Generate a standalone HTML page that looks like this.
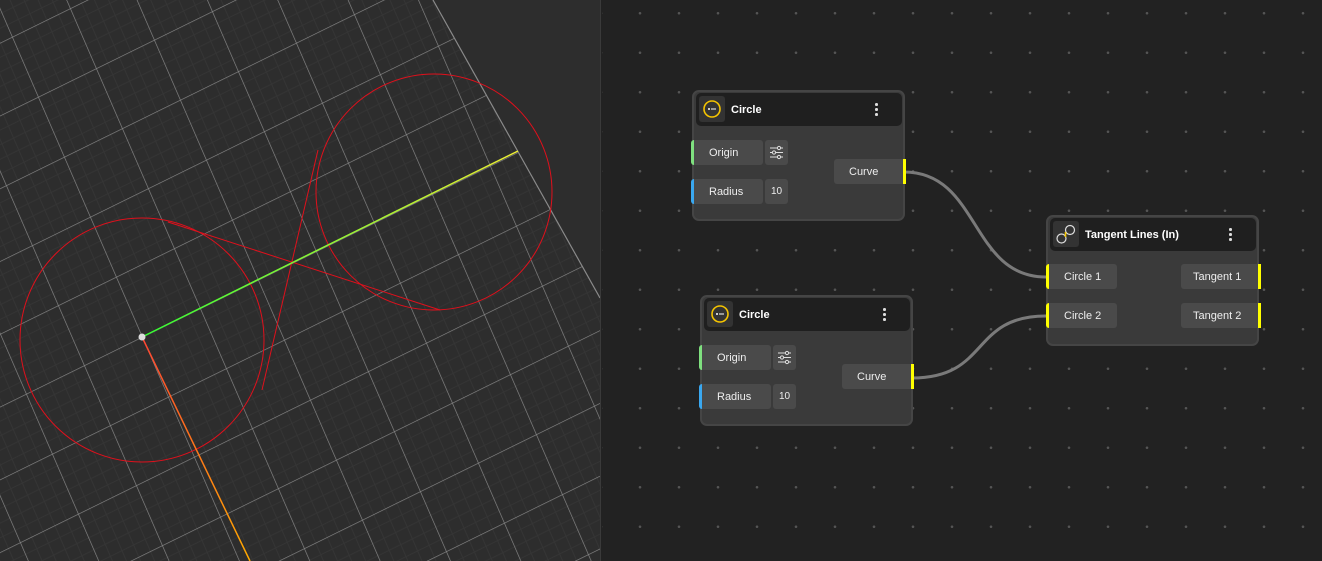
<!DOCTYPE html>
<html><head><meta charset="utf-8"><style>
*{box-sizing:border-box;margin:0;padding:0}
body{width:1322px;height:561px;overflow:hidden;background:#222;font-family:"Liberation Sans",sans-serif;position:relative}
#left{position:absolute;left:0;top:0;width:601px;height:561px;background:#2d2d2d;border-right:1px solid #3a3a3a;overflow:hidden}
#right{position:absolute;left:602px;top:0;width:720px;height:561px;background-color:#222;background-image:radial-gradient(circle,#555 1.1px,transparent 1.5px);background-size:39px 39.5px;background-position:18.5px -6.5px}
.node{position:absolute;width:213px;height:131px;background:#3a3a3a;border:2px solid #454545;border-radius:7px}
.hdr{position:absolute;left:2px;top:1px;right:1px;height:33px;background:#1f1f1f;border-radius:5px}
.ico{position:absolute;left:3px;top:3px;width:26px;height:26px;background:#333;border-radius:3px}
.ttl{position:absolute;left:35px;top:11px;color:#fff;font-weight:bold;font-size:11px}
.menu{position:absolute;right:24px;top:10px;width:3px}
.menu i{display:block;width:2.5px;height:2.5px;background:#ddd;border-radius:50%;margin-bottom:2.5px}
.row{position:absolute;height:25px;background:#4a4a4a;border-radius:3px;color:#eee;font-size:11px;line-height:26px;padding-left:15px}
.lb{border-left:3px solid}
.rb{border-right:3px solid #ff0;border-top-right-radius:0;border-bottom-right-radius:0}
.sq{position:absolute;height:25px;width:23px;background:#4a4a4a;border-radius:3px;color:#eee;font-size:10px;line-height:26px;text-align:center}
</style></head><body>
<div id="left">
<svg width="601" height="561" style="position:absolute;left:0;top:0">
<defs>
<pattern id="g" patternUnits="userSpaceOnUse" width="1" height="1" patternTransform="matrix(58 -28.5 26 60 142 337)">
<path d="M0.2 0V1M0.4 0V1M0.6 0V1M0.8 0V1M0 0.2H1M0 0.4H1M0 0.6H1M0 0.8H1" stroke="#353535" stroke-width="0.014"/>
<path d="M0 0V1M0 0H1" stroke="#8a8a8a" stroke-width="0.02"/>
</pattern>
<clipPath id="c"><polygon points="0,0 433,0 600,298 600,561 0,561"/></clipPath>
<linearGradient id="gy" x1="0" y1="0" x2="1" y2="0"><stop offset="0" stop-color="#3f3"/><stop offset="1" stop-color="#ee3"/></linearGradient>
<linearGradient id="ro" x1="0" y1="0" x2="0" y2="1"><stop offset="0" stop-color="#f43"/><stop offset="1" stop-color="#fa0"/></linearGradient>
</defs>
<rect width="601" height="561" fill="url(#g)" clip-path="url(#c)"/>
<line x1="433" y1="0" x2="600" y2="298" stroke="#8a8a8a" stroke-width="1.2"/>
<g fill="none" stroke="#e0101c" stroke-width="1">
<circle cx="142" cy="340" r="122"/>
<circle cx="434" cy="192" r="118"/>
<line x1="168" y1="222" x2="440" y2="310"/>
<line x1="318" y1="150" x2="262" y2="390"/>
</g>
<line x1="142" y1="337" x2="518" y2="151" stroke="url(#gy)" stroke-width="1.5"/>
<path d="M142 337L250 561" stroke="url(#ro)" stroke-width="1.5"/>
<circle cx="142" cy="337" r="3.5" fill="#ddd"/>
</svg>
</div>
<div id="right"></div>
<svg width="1322" height="561" style="position:absolute;left:0;top:0">
<path d="M904 172C980 172 970 277 1046 277" fill="none" stroke="#7a7a7a" stroke-width="3"/>
<path d="M912 378C990 378 970 316 1046 316" fill="none" stroke="#7a7a7a" stroke-width="3"/>
</svg>

<div class="node" style="left:692px;top:90px">
<div class="hdr"><div class="ico"><svg width="26" height="26"><circle cx="13" cy="13" r="8" fill="none" stroke="#f5c400" stroke-width="1.6"/><circle cx="10" cy="13" r="1" fill="#fff"/><line x1="12" y1="13" x2="17" y2="13" stroke="#fff" stroke-width="1"/></svg></div><div class="ttl">Circle</div><div class="menu"><i></i><i></i><i></i></div></div>
<div class="row lb" style="left:-3px;top:48px;width:72px;border-color:#7fe07f">Origin</div>
<div class="sq" style="left:71px;top:48px"><svg width="23" height="25"><g stroke="#ddd" stroke-width="1" fill="#4a4a4a"><line x1="5" y1="8" x2="18" y2="8"/><line x1="5" y1="12.5" x2="18" y2="12.5"/><line x1="5" y1="17" x2="18" y2="17"/><circle cx="14" cy="8" r="1.6"/><circle cx="9" cy="12.5" r="1.6"/><circle cx="14" cy="17" r="1.6"/></g></svg></div>
<div class="row lb" style="left:-3px;top:87px;width:72px;border-color:#3aa8f0">Radius</div>
<div class="sq" style="left:71px;top:87px">10</div>
<div class="row rb" style="left:140px;top:67px;width:72px">Curve</div>
</div>

<div class="node" style="left:700px;top:295px">
<div class="hdr"><div class="ico"><svg width="26" height="26"><circle cx="13" cy="13" r="8" fill="none" stroke="#f5c400" stroke-width="1.6"/><circle cx="10" cy="13" r="1" fill="#fff"/><line x1="12" y1="13" x2="17" y2="13" stroke="#fff" stroke-width="1"/></svg></div><div class="ttl">Circle</div><div class="menu"><i></i><i></i><i></i></div></div>
<div class="row lb" style="left:-3px;top:48px;width:72px;border-color:#7fe07f">Origin</div>
<div class="sq" style="left:71px;top:48px"><svg width="23" height="25"><g stroke="#ddd" stroke-width="1" fill="#4a4a4a"><line x1="5" y1="8" x2="18" y2="8"/><line x1="5" y1="12.5" x2="18" y2="12.5"/><line x1="5" y1="17" x2="18" y2="17"/><circle cx="14" cy="8" r="1.6"/><circle cx="9" cy="12.5" r="1.6"/><circle cx="14" cy="17" r="1.6"/></g></svg></div>
<div class="row lb" style="left:-3px;top:87px;width:72px;border-color:#3aa8f0">Radius</div>
<div class="sq" style="left:71px;top:87px">10</div>
<div class="row rb" style="left:140px;top:67px;width:72px">Curve</div>
</div>

<div class="node" style="left:1046px;top:215px;width:213px">
<div class="hdr"><div class="ico"><svg width="26" height="26"><circle cx="8.5" cy="17.5" r="4.5" fill="none" stroke="#ddd" stroke-width="1.2"/><circle cx="17" cy="9" r="4.5" fill="none" stroke="#ddd" stroke-width="1.2"/><line x1="12.5" y1="11" x2="12.5" y2="16" stroke="#f5c400" stroke-width="1.6"/></svg></div><div class="ttl">Tangent Lines (In)</div><div class="menu"><i></i><i></i><i></i></div></div>
<div class="row lb" style="left:-2px;top:47px;width:71px;border-color:#ff0">Circle 1</div>
<div class="row lb" style="left:-2px;top:86px;width:71px;border-color:#ff0">Circle 2</div>
<div class="row rb" style="left:133px;top:47px;width:80px;padding-left:12px">Tangent 1</div>
<div class="row rb" style="left:133px;top:86px;width:80px;padding-left:12px">Tangent 2</div>
</div>
</body></html>
